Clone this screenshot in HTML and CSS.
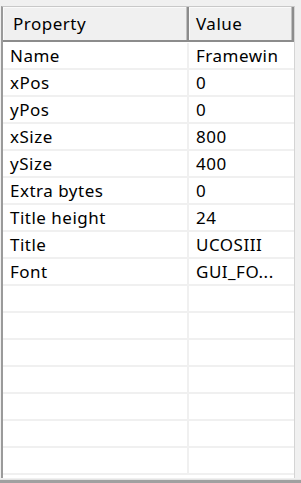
FILE: index.html
```html
<!DOCTYPE html>
<html lang="en">
<head>
    <meta charset="UTF-8">
    <meta name="viewport" content="width=device-width, initial-scale=1.0">
    <title>Properties</title>
    <link rel="stylesheet" href="styles.css">
</head>
<body>
    <div class="listview">
        <div class="header">
            <div class="head-cell head-prop">Property</div>
            <div class="head-cell head-value">Value</div>
        </div>

        <div class="rows">
            <div class="row"><div class="cell prop">Name</div><div class="cell value">Framewin</div></div>
            <div class="row"><div class="cell prop">xPos</div><div class="cell value">0</div></div>
            <div class="row"><div class="cell prop">yPos</div><div class="cell value">0</div></div>
            <div class="row"><div class="cell prop">xSize</div><div class="cell value">800</div></div>
            <div class="row"><div class="cell prop">ySize</div><div class="cell value">400</div></div>
            <div class="row"><div class="cell prop">Extra bytes</div><div class="cell value">0</div></div>
            <div class="row"><div class="cell prop">Title height</div><div class="cell value">24</div></div>
            <div class="row"><div class="cell prop">Title</div><div class="cell value">UCOSIII</div></div>
            <div class="row"><div class="cell prop">Font</div><div class="cell value">GUI_FO...</div></div>
            <div class="row"><div class="cell prop"></div><div class="cell value"></div></div>
            <div class="row"><div class="cell prop"></div><div class="cell value"></div></div>
            <div class="row"><div class="cell prop"></div><div class="cell value"></div></div>
            <div class="row"><div class="cell prop"></div><div class="cell value"></div></div>
            <div class="row"><div class="cell prop"></div><div class="cell value"></div></div>
            <div class="row"><div class="cell prop"></div><div class="cell value"></div></div>
            <div class="row"><div class="cell prop"></div><div class="cell value"></div></div>
        </div>
    </div>

    <div class="bottom-edge"></div>
</body>
</html>
```

FILE: styles.css
```css
* {
    margin: 0;
    padding: 0;
    box-sizing: border-box;
}

body {
    font-family: 'Noto Sans', 'Liberation Sans', sans-serif;
    font-size: 17px;
    letter-spacing: 0.5px;
    background: #f0f0f0;
    color: #000;
    width: 301px;
    height: 483px;
    overflow: hidden;
    padding-top: 6px;
}

.listview {
    margin-left: 1px;
    width: 294px;
    height: 472px;
    background: #fff;
    border-left: 2px solid #9a9a9a;
    border-right: 1px solid #d4d4d4;
    border-top: 1px solid #c8c8c8;
    display: flex;
    flex-direction: column;
}

.header {
    display: grid;
    grid-template-columns: 186px 1fr;
    height: 35px;
    background: #f0f0f0;
    border-bottom: 2px solid #8c8c8c;
}

.head-cell {
    display: flex;
    align-items: center;
    border-right: 2px solid #8c8c8c;
    box-shadow: inset -1px 0 0 #c0c0c0, inset 1px 1px 0 #fafafa;
}

.head-prop {
    padding-left: 10px;
}

.head-value {
    padding-left: 7px;
}

.rows {
    flex: 1;
    padding-top: 1px;
}

.row {
    display: grid;
    grid-template-columns: 186px 1fr;
    height: 27px;
    border-bottom: 2px solid #f0f0f0;
}

.cell {
    display: flex;
    align-items: center;
    white-space: nowrap;
    overflow: hidden;
}

.prop {
    padding-left: 7px;
    border-right: 2px solid #f0f0f0;
}

.value {
    padding-left: 7px;
}

.bottom-edge {
    margin-top: 1px;
    height: 4px;
    border-top: 1px solid #e4e4e4;
    background: #a0a0a0;
}
```
